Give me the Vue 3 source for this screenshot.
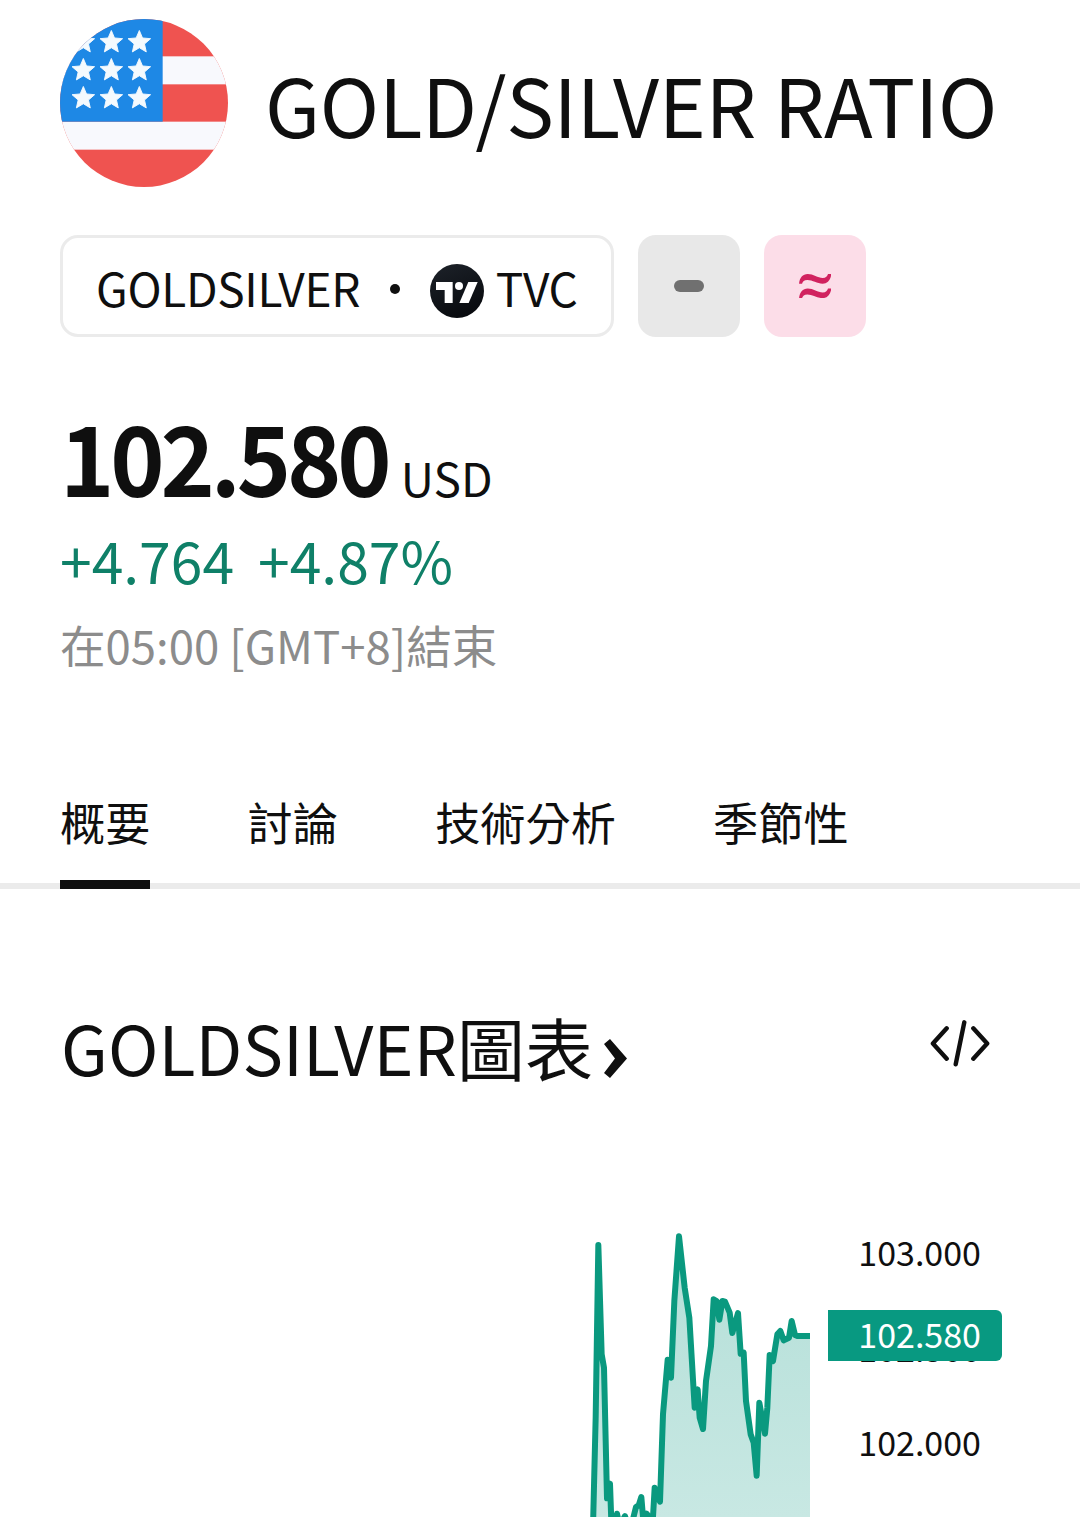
<script setup>
const starRows = [2.5, 5.5, 8.5]
const starCols = [2.5, 5.5, 8.5]

function star(cx, cy) {
  const pts = []
  for (let i = 0; i < 10; i++) {
    const r = i % 2 ? 0.58 : 1.27
    const a = (Math.PI / 5) * i - Math.PI / 2
    pts.push(`${(cx + r * Math.cos(a)).toFixed(3)},${(cy + r * Math.sin(a)).toFixed(3)}`)
  }
  return pts.join(' ')
}

const stars = starRows.flatMap((y) => starCols.map((x) => star(x, y)))

const tabs = ['概要', '討論', '技術分析', '季節性']

const series = [
  [37, 1000], [47, 590], [55, 72], [65, 400], [72, 440], [81, 832], [90, 788], [95, 930],
  [104, 915], [111, 878], [119, 915], [135, 885], [149, 930], [160, 890], [168, 858], [176, 853],
  [184, 828], [190, 900], [200, 878], [218, 905], [224, 800], [240, 842], [249, 580], [263, 416],
  [273, 470], [283, 240], [297, 46], [314, 200], [328, 290], [344, 560], [353, 505], [359, 590],
  [369, 624], [378, 480], [393, 375], [401, 235], [410, 240], [418, 296], [427, 240], [435, 242],
  [449, 275], [457, 336], [474, 276], [482, 398], [491, 395], [498, 540], [512, 640], [521, 665],
  [530, 764], [538, 545], [555, 638], [562, 560], [569, 402], [579, 420], [592, 340], [601, 330],
  [611, 358], [627, 350], [635, 300], [645, 342], [652, 345], [690, 345],
]
const line = series.map((p) => p.join(',')).join(' ')
const area = `${line} 690,1000 37,1000`
</script>

<template>
  <main class="page">
    <header class="head">
      <svg class="flag" viewBox="0 0 18 18">
        <defs>
          <clipPath id="round"><circle cx="9" cy="9" r="9" /></clipPath>
        </defs>
        <g clip-path="url(#round)">
          <rect width="18" height="18" fill="#ef5350" />
          <rect y="4" width="18" height="3" fill="#f8f9fd" />
          <rect y="11" width="18" height="3" fill="#f8f9fd" />
          <rect width="11" height="11" fill="#1e88e5" />
          <polygon
            v-for="(s, i) in stars" :key="i" :points="s"
            fill="#f4fafe" stroke="#f4fafe" stroke-width="0.1" stroke-linejoin="round"
          />
        </g>
      </svg>
      <h1 class="title">GOLD/SILVER RATIO</h1>
    </header>

    <div class="chips">
      <div class="symbol">
        <span class="ticker">GOLDSILVER</span>
        <i class="dot"></i>
        <svg class="logo" viewBox="0 0 162 162">
          <defs>
            <linearGradient id="ink" x1="0.7" y1="1" x2="0.3" y2="0">
              <stop offset="0" stop-color="#07090d" />
              <stop offset="1" stop-color="#1b2027" />
            </linearGradient>
          </defs>
          <circle cx="81" cy="81" r="81" fill="url(#ink)" />
          <path d="M18 54H68V117H44V78H18Z" fill="#fff" />
          <circle cx="87" cy="66" r="12" fill="#fff" />
          <path d="M115 54H143L116 117H88Z" fill="#fff" />
        </svg>
        <span class="exchange">TVC</span>
      </div>
      <div class="badge closed"><i class="dash"></i></div>
      <div class="badge approx">
        <svg class="wave" viewBox="0 0 97 73">
          <path d="M0 29C2 11 11 0 26 0C43 0 56 12 71 12C81 12 85 7 87 0H97C95 18 85 29 71 29C54 29 41 18 25 18C15 18 11 23 9 29Z" fill="#d1225f" />
          <path transform="translate(0 43.5)" d="M0 29C2 11 11 0 26 0C43 0 56 12 71 12C81 12 85 7 87 0H97C95 18 85 29 71 29C54 29 41 18 25 18C15 18 11 23 9 29Z" fill="#d1225f" />
        </svg>
      </div>
    </div>

    <section class="quote">
      <div class="price-row">
        <span class="price">102.580</span>
        <span class="currency">USD</span>
      </div>
      <div class="change"><span>+4.764</span><span>+4.87%</span></div>
      <div class="time">在05:00 [GMT+8]結束</div>
    </section>

    <nav class="tabs">
      <a v-for="(t, i) in tabs" :key="t" class="tab" :class="{ active: i === 0 }">{{ t }}</a>
    </nav>

    <div class="section-head">
      <h2 class="section-title">GOLDSILVER圖表</h2>
      <svg class="chevron" viewBox="0 0 23 39">
        <path d="M0 5L6 0L23 19.5L6 39L0 34L11 19.5Z" fill="#0f0f0f" />
      </svg>
      <svg class="code" viewBox="0 0 60 48">
        <path
          d="M16.7 8.3L2.9 23.5L16.7 38.7M43.3 8.3L57.2 23.5L43.3 38.7M34.3 2.3L25.7 44.3"
          fill="none" stroke="#0f0f0f" stroke-width="4.4" stroke-linecap="round" stroke-linejoin="round"
        />
      </svg>
    </div>

    <section class="chart">
      <svg class="plot" viewBox="30 0 660 889">
        <defs>
          <linearGradient id="fade" gradientUnits="userSpaceOnUse" x1="0" y1="46" x2="0" y2="889">
            <stop offset="0" stop-color="#b4dfd8" />
            <stop offset="1" stop-color="#c8e8e3" />
          </linearGradient>
        </defs>
        <polygon :points="area" fill="url(#fade)" />
        <polyline :points="line" fill="none" stroke="#0a997f" stroke-width="18" stroke-linejoin="round" />
      </svg>
      <div class="axis">
        <span class="tick t103">103.000</span>
        <span class="tick t1025">102.500</span>
        <span class="tick t102">102.000</span>
        <span class="tick last">102.580</span>
      </div>
    </section>
  </main>
</template>

<style>
body {
  background: #fff;
}
</style>

<style scoped>
.page {
  box-sizing: border-box;
  width: 1080px;
  height: 1522px;
  overflow: hidden;
  padding-top: 19px;
  background: #fff;
  color: #0f0f0f;
  font-family: "Noto Sans CJK TC", "Noto Sans CJK SC", sans-serif;
}
svg {
  display: block;
  flex: none;
}
.head {
  display: flex;
  align-items: center;
  gap: 37px;
  height: 168px;
  padding-left: 60px;
}
.flag {
  width: 168px;
  height: 168px;
}
.title {
  margin: 0;
  font-size: 80px;
  line-height: 100px;
  font-weight: 400;
  letter-spacing: -0.3px;
  white-space: nowrap;
}
.chips {
  display: flex;
  gap: 24px;
  margin: 48px 0 0 60px;
}
.symbol {
  box-sizing: border-box;
  display: flex;
  align-items: center;
  width: 554px;
  height: 102px;
  padding: 0 0 0 33px;
  border: 3px solid #ebebeb;
  border-radius: 18px;
  font-size: 46px;
  line-height: 60px;
  letter-spacing: -0.3px;
}
.ticker,
.exchange {
  margin-top: 2px;
}
.dot {
  width: 10px;
  height: 10px;
  margin: 6px 0 0 30px;
  border-radius: 50%;
  background: #0f0f0f;
}
.logo {
  width: 54px;
  height: 54px;
  margin: 10px 11.5px 0 30px;
}
.badge {
  display: flex;
  align-items: center;
  justify-content: center;
  width: 102px;
  height: 102px;
  border-radius: 18px;
}
.closed {
  background: #e8e8e8;
}
.approx {
  background: #fcdde8;
}
.dash {
  width: 30px;
  height: 12px;
  border-radius: 6px;
  background: #707070;
}
.wave {
  width: 32.4px;
  height: 24.3px;
}
.quote {
  margin: 63px 0 0 60px;
}
.price-row {
  display: flex;
  align-items: baseline;
  height: 110px;
  line-height: 110px;
}
.price {
  font-size: 97px;
  font-weight: 700;
  letter-spacing: -4.3px;
  transform: scaleX(0.95);
  transform-origin: left;
}
.currency {
  margin-left: -4px;
  font-size: 46px;
}
.change {
  display: flex;
  gap: 24px;
  margin-top: 9px;
  color: #0f8068;
  font-size: 57px;
  line-height: 80px;
}
.time {
  margin-top: 15px;
  color: #8c8c8c;
  font-size: 45.5px;
  line-height: 60px;
}
.tabs {
  box-sizing: border-box;
  display: flex;
  gap: 97.2px;
  height: 98px;
  margin-top: 117px;
  padding-left: 60px;
  box-shadow: inset 0 -6px #ebebeb;
  font-size: 45.2px;
  line-height: 62px;
}
.tab {
  box-sizing: border-box;
  height: 98px;
}
.active {
  border-bottom: 9px solid #0f0f0f;
}
.section-head {
  display: flex;
  height: 100px;
  margin-top: 107px;
  padding-left: 61px;
}
.section-title {
  margin: 0;
  font-size: 68px;
  line-height: 102px;
  font-weight: 400;
  letter-spacing: 0.1px;
}
.chevron {
  width: 23px;
  height: 39px;
  margin: 42.5px 0 0 11px;
}
.code {
  width: 60px;
  height: 48px;
  margin: 24px 90px 0 auto;
}
.chart {
  display: flex;
  gap: 18px;
  margin-top: 124px;
  padding-left: 590px;
}
.plot {
  width: 220px;
  height: 296.4px;
  margin-top: 0.5px;
}
.axis {
  position: relative;
  width: 174px;
  font-size: 34px;
  line-height: 51px;
}
.tick {
  position: absolute;
  left: 0;
  box-sizing: border-box;
  width: 174px;
  height: 51px;
  padding-left: 30.3px;
}
.t103 {
  top: 6px;
}
.t1025 {
  top: 102px;
}
.t102 {
  top: 196px;
}
.last {
  top: 89.6px;
  border-radius: 0 6px 6px 0;
  background: #089981;
  color: #fff;
  line-height: 47px;
}
</style>
